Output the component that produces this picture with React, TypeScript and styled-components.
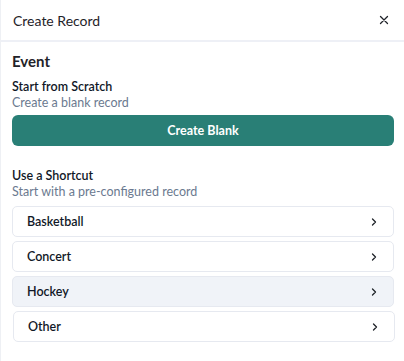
import { FunctionComponent } from "react";
import styled, { createGlobalStyle } from "styled-components";

const GlobalStyle = createGlobalStyle`
  html, body {
    margin: 0;
    padding: 0;
    background: #ffffff;
  }
  body {
    font-family: Lato, "Noto Sans", sans-serif;
    color: #111827;
  }
`;

const Panel = styled.div`
  width: 404px;
  height: 361px;
  background: #ffffff;
  border-left: 1px solid #eef0f4;
  box-sizing: border-box;
  display: flex;
  flex-direction: column;
`;

const Header = styled.div`
  height: 42px;
  display: flex;
  align-items: center;
  justify-content: space-between;
  padding: 0 12px 0 12px;
  border-bottom: 2px solid #eef0f6;
  box-sizing: border-box;
`;

const Title = styled.h2`
  margin: 0;
  font-size: 14px;
  font-weight: 400;
  color: #1f2329;
`;

const CloseButton = styled.button`
  border: none;
  background: none;
  padding: 0;
  width: 16px;
  height: 16px;
  display: flex;
  align-items: center;
  justify-content: center;
  color: #1f2329;
  cursor: pointer;
`;

const Body = styled.div`
  padding: 9px 10px 0 11px;
  display: flex;
  flex-direction: column;
`;

const SectionTitle = styled.h3`
  margin: 0;
  font-size: 15px;
  font-weight: 700;
  line-height: 20px;
  color: #1f2329;
`;

const Group = styled.div<{ $top: number }>`
  margin-top: ${(p) => p.$top}px;
  display: flex;
  flex-direction: column;
`;

const Label = styled.div`
  font-size: 12.5px;
  font-weight: 600;
  line-height: 16px;
  color: #111827;
`;

const Hint = styled.div`
  font-size: 12.5px;
  line-height: 16px;
  color: #6b7a90;
`;

const PrimaryButton = styled.button`
  margin-top: 4px;
  height: 31px;
  width: 100%;
  border: none;
  border-radius: 6px;
  background: #297f76;
  color: #ffffff;
  font-family: inherit;
  font-size: 12.5px;
  font-weight: 700;
  cursor: pointer;
`;

const List = styled.div`
  margin-top: 6px;
  display: flex;
  flex-direction: column;
  gap: 4px;
`;

const Row = styled.button<{ $active?: boolean; $shift?: boolean }>`
  height: 31px;
  width: 100%;
  display: flex;
  align-items: center;
  justify-content: space-between;
  padding: 0 14px 0 14px;
  box-sizing: border-box;
  border: 1px solid #e6e9f0;
  border-radius: 5px;
  background: ${(p) => (p.$active ? "#f0f3f8" : "#ffffff")};
  transform: ${(p) => (p.$shift ? "translateX(1px)" : "none")};
  font-family: inherit;
  font-size: 12.5px;
  font-weight: 600;
  color: #111827;
  text-align: left;
  cursor: pointer;
`;

const Chevron = () => (
  <svg width="10" height="10" viewBox="0 0 10 10" fill="none">
    <path d="M3.5 2 L6.5 5 L3.5 8" stroke="#1f2329" strokeWidth="1.3" strokeLinecap="round" strokeLinejoin="round" />
  </svg>
);

const shortcuts = [
  { name: "Basketball" },
  { name: "Concert" },
  { name: "Hockey", active: true },
  { name: "Other", shift: true },
];

const App: FunctionComponent = () => {
  return (
    <>
      <GlobalStyle />
      <Panel>
        <Header>
          <Title>Create Record</Title>
          <CloseButton aria-label="Close">
            <svg width="10" height="10" viewBox="0 0 10 10">
              <path d="M1.5 1.5 L8.5 8.5 M8.5 1.5 L1.5 8.5" stroke="#1f2329" strokeWidth="1.3" strokeLinecap="round" />
            </svg>
          </CloseButton>
        </Header>
        <Body>
          <SectionTitle>Event</SectionTitle>
          <Group $top={8}>
            <Label>Start from Scratch</Label>
            <Hint>Create a blank record</Hint>
            <PrimaryButton>Create Blank</PrimaryButton>
          </Group>
          <Group $top={22}>
            <Label>Use a Shortcut</Label>
            <Hint>Start with a pre-configured record</Hint>
            <List>
              {shortcuts.map((s) => (
                <Row key={s.name} $active={s.active} $shift={s.shift}>
                  <span>{s.name}</span>
                  <Chevron />
                </Row>
              ))}
            </List>
          </Group>
        </Body>
      </Panel>
    </>
  );
};

export default App;
